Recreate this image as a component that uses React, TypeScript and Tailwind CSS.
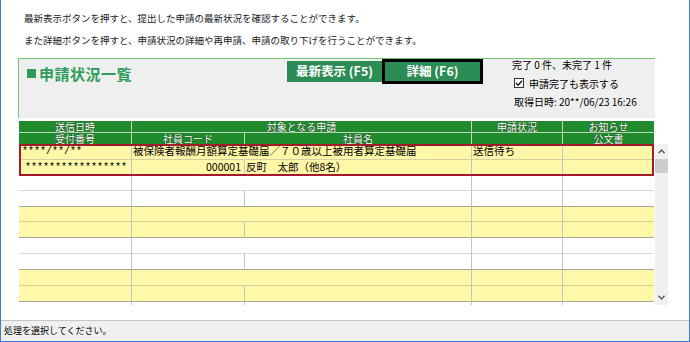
import React from "react";

const jp = { fontFamily: '"Noto Sans CJK JP", "Noto Sans", sans-serif' };
const mono = { fontFamily: '"Liberation Mono", "Noto Sans CJK JP", monospace' };

const cols = "grid grid-cols-[113px_113px_227px_91px_91px]";

type Rec = {
  yellow: boolean;
  h: string;
  selected?: boolean;
  d?: { date: string; name: string; status: string; num: string; code: string; emp: string };
};

const recs: Rec[] = [
  {
    yellow: true,
    h: "grid-rows-[16px_16px]",
    selected: true,
    d: {
      date: "****/**/**",
      name: "被保険者報酬月額算定基礎届／７０歳以上被用者算定基礎届",
      status: "送信待ち",
      num: "*****************",
      code: "000001",
      emp: "反町　太郎（他8名）",
    },
  },
  { yellow: false, h: "grid-rows-[15px_16px]" },
  { yellow: true, h: "grid-rows-[15px_16px]" },
  { yellow: false, h: "grid-rows-[16px_16px]" },
  { yellow: true, h: "grid-rows-[16px_16px]" },
];

function Record({ r }: { r: Rec }) {
  const bg = r.yellow ? "bg-[#fff8a8]" : "bg-white";
  const mid = r.yellow ? "border-b-[#d4cfa0]" : "border-b-[#d8d8d8]";
  const bot = "border-b-[#a8a69a]";
  const v = "border-r border-r-[#c4c4c4]";
  const d = r.d;
  return (
    <div className="relative">
      <div className={`${cols} ${r.h} ${bg} text-[10.5px] leading-none text-black`}>
        <div className={`${v} border-b ${mid} flex items-center pl-[3px]`} style={mono}>
          <span className="text-[10px]">{d?.date}</span>
        </div>
        <div className={`col-span-2 ${v} border-b ${mid} flex items-center pl-[1px] whitespace-nowrap`} style={jp}>
          {d?.name}
        </div>
        <div className={`${v} border-b ${mid} flex items-center pl-[1px]`} style={jp}>
          {d?.status}
        </div>
        <div className={`border-b ${mid}`} />
        <div className={`${v} border-b ${bot} flex items-center pl-[6px]`} style={mono}>
          <span className="text-[10px]">{d?.num}</span>
        </div>
        <div className={`${v} border-b ${bot} flex items-center justify-end pr-[3px]`} style={jp}>
          {d?.code}
        </div>
        <div className={`${v} border-b ${bot} flex items-center pl-[1px]`} style={jp}>
          {d?.emp}
        </div>
        <div className={`${v} border-b ${bot}`} />
        <div className={`border-b ${bot}`} />
      </div>
      {r.selected && (
        <div className="absolute inset-0 border-2 border-[#a31a2b] pointer-events-none" />
      )}
    </div>
  );
}

function HeadCell({ children, className = "" }: { children?: React.ReactNode; className?: string }) {
  return (
    <div
      className={`flex items-center justify-center text-white text-[10px] leading-[10px] [text-shadow:0_0_1px_#1b3b1b,0_0_1px_#1b3b1b] ${className}`}
      style={jp}
    >
      {children}
    </div>
  );
}

export default function App() {
  return (
    <div
      className="w-[690px] h-[342px] bg-white border-l border-r border-b border-[#3c7dd2] flex flex-col overflow-hidden text-black"
      style={jp}
    >
      {/* intro */}
      <div className="h-[58px] pl-[23px] pt-[7px] text-[9.5px] leading-[22px] text-[#1a1a1a]">
        <div>最新表示ボタンを押すと、提出した申請の最新状況を確認することができます。</div>
        <div>また詳細ボタンを押すと、申請状況の詳細や再申請、申請の取り下げを行うことができます。</div>
      </div>

      {/* panel */}
      <div className="ml-[17px] w-[637px] h-[60px] bg-[#efefef] border-t border-l border-[#74c474] flex items-start">
        <div className="w-[268px] h-[28px] pl-[8px] flex items-center gap-[3px]">
          <div className="w-[9px] h-[9px] bg-[#2e9d5b]" />
          <div className="text-[15px] font-bold text-[#2e9d5b] leading-none tracking-[0.5px]">申請状況一覧</div>
        </div>
        <div className="flex items-start">
          <div className="mt-[2px] w-[95px] h-[21px] bg-[#2b8c55] text-white font-bold text-[12.5px] flex items-center justify-center leading-none">
            最新表示 (F5)
          </div>
          <div className="w-[101px] h-[25px] border-[3px] border-black bg-[#2b8c55] text-white font-bold text-[12.5px] flex items-center justify-center leading-none">
            詳細 (F6)
          </div>
        </div>
        <div className="ml-[29px] text-[10px] text-black">
          <div className="h-[12px] leading-[12px]">完了 0 件、未完了 1 件</div>
          <div className="h-[24px] pl-[2px] flex items-center gap-[5px]">
            <svg width="10" height="10" viewBox="0 0 10 10">
              <rect x="0.5" y="0.5" width="9" height="9" fill="#fff" stroke="#333" />
              <path d="M2 5 L4.2 7.2 L8 2.6" fill="none" stroke="#111" strokeWidth="1.4" />
            </svg>
            <span>申請完了も表示する</span>
          </div>
          <div className="h-[14px] leading-[14px] pl-[2px]">取得日時: 20**/06/23 16:26</div>
        </div>
      </div>

      {/* table */}
      <div className="mt-[3px] ml-[18px] flex gap-[1px]">
        <div className="w-[635px]">
          <div className={`${cols} grid-rows-[12px_11px] bg-[#1f8b2c]`}>
            <HeadCell className="border-r border-b border-[#bcd8bc]">送信日時</HeadCell>
            <HeadCell className="col-span-2 border-r border-b border-[#bcd8bc]">対象となる申請</HeadCell>
            <HeadCell className="border-r border-b border-[#bcd8bc]">申請状況</HeadCell>
            <HeadCell className="border-b border-[#bcd8bc]">お知らせ</HeadCell>
            <HeadCell className="border-r border-[#bcd8bc]">受付番号</HeadCell>
            <HeadCell className="border-r border-[#bcd8bc]">社員コード</HeadCell>
            <HeadCell className="border-r border-[#bcd8bc]">社員名</HeadCell>
            <HeadCell className="border-r border-[#bcd8bc]" />
            <HeadCell>公文書</HeadCell>
          </div>
          {recs.map((r, i) => (
            <Record key={i} r={r} />
          ))}
          <div className={`${cols} h-[3px]`}>
            <div className="border-r border-[#c4c4c4]" />
            <div className="border-r border-[#c4c4c4]" />
            <div className="border-r border-[#c4c4c4]" />
            <div className="border-r border-[#c4c4c4]" />
            <div />
          </div>
        </div>
        <div className="mt-[23px] w-[13px] h-[161px] bg-[#f0f0f0] flex flex-col items-center">
          <div className="h-[15px] flex items-center justify-center">
            <svg width="7" height="5" viewBox="0 0 7 5">
              <path d="M0.5 4.2 L3.5 1 L6.5 4.2" fill="none" stroke="#555" strokeWidth="1.3" />
            </svg>
          </div>
          <div className="w-[13px] h-[14px] bg-[#cdcdcd]" />
          <div className="flex-1" />
          <div className="h-[15px] flex items-center justify-center">
            <svg width="7" height="5" viewBox="0 0 7 5">
              <path d="M0.5 0.8 L3.5 4 L6.5 0.8" fill="none" stroke="#555" strokeWidth="1.3" />
            </svg>
          </div>
        </div>
      </div>

      {/* status bar */}
      <div className="mt-auto h-[21px] bg-[#f0f0f0] border-t border-[#c6c6c6] pl-[3px] flex items-center text-[9px] text-black">
        処理を選択してください。
      </div>
    </div>
  );
}
